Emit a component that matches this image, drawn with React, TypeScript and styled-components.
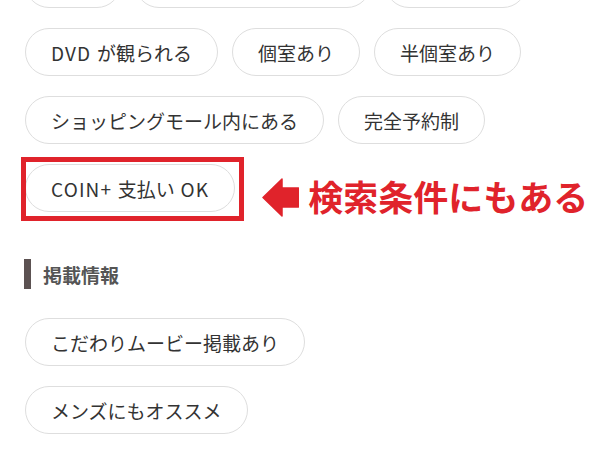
import React from "react";
import styled, { createGlobalStyle } from "styled-components";

const GlobalStyle = createGlobalStyle`
  html, body {
    margin: 0;
    padding: 0;
    background: #ffffff;
  }
  body {
    font-family: "Noto Sans CJK JP", "Noto Sans", sans-serif;
    color: #333333;
    overflow: hidden;
  }
`;

const Page = styled.div`
  display: flex;
  flex-direction: column;
  padding: 0 0 0 25px;
  margin-top: -40px;
`;

const TagList = styled.ul<{ $column?: boolean }>`
  display: flex;
  flex-direction: ${(p) => (p.$column ? "column" : "row")};
  flex-wrap: ${(p) => (p.$column ? "nowrap" : "wrap")};
  align-items: ${(p) => (p.$column ? "flex-start" : "center")};
  column-gap: 14px;
  row-gap: 20px;
  margin: 0;
  padding: 0;
  list-style: none;
`;

const Item = styled.li`
  display: flex;
  align-items: flex-start;
`;

const Tag = styled.span<{ $outlined?: boolean; $width?: number }>`
  position: relative;
  box-sizing: border-box;
  display: inline-flex;
  align-items: center;
  justify-content: center;
  height: 48px;
  width: ${(p) => (p.$width ? `${p.$width}px` : "auto")};
  padding: 0 25px;
  border: 1px solid #dedede;
  border-radius: 24px;
  background: #ffffff;
  color: #333333;
  font-size: 19px;
  line-height: 1;
  white-space: nowrap;

  ${(p) =>
    p.$outlined &&
    `
    &::after {
      content: "";
      position: absolute;
      top: -8px;
      left: -5px;
      right: -10px;
      bottom: -10px;
      border: 5px solid #e0232b;
    }
  `}
`;

const Latin = styled.span<{ $lead?: boolean }>`
  letter-spacing: 0.06em;
  margin-right: ${(p) => (p.$lead ? "0.3em" : "0")};
  margin-left: ${(p) => (p.$lead ? "0" : "0.3em")};
`;

const Note = styled.div`
  display: flex;
  align-items: center;
  gap: 9px;
  margin: 14px 0 -5px 27px;
`;

const NoteText = styled.span`
  font-size: 35px;
  font-weight: 700;
  line-height: 1;
  color: #e0232b;
  white-space: nowrap;
  margin-bottom: 4px;
`;

const Heading = styled.h2`
  display: flex;
  align-items: center;
  height: 30px;
  margin: 47px 0 29px -1px;
  padding-left: 12px;
  border-left: 7px solid #5c5252;
  font-size: 19px;
  font-weight: 700;
  color: #555555;
  line-height: 1;
`;

const Arrow = () => (
  <svg width="37" height="39" viewBox="0 0 37 39" aria-hidden="true">
    <polygon
      points="1,19.5 20,1 20,10 36.5,10 36.5,29 20,29 20,38"
      fill="#e0232b"
      stroke="#e0232b"
      strokeWidth="1.5"
      strokeLinejoin="round"
    />
  </svg>
);

const hiddenRow = [96, 236, 142];

export default function App() {
  return (
    <>
      <GlobalStyle />
      <Page>
        <TagList>
          {hiddenRow.map((w, i) => (
            <Item key={`h${i}`}>
              <Tag $width={w} />
            </Item>
          ))}
          <Item>
            <Tag>
              <Latin $lead>DVD</Latin>が観られる
            </Tag>
          </Item>
          <Item>
            <Tag>個室あり</Tag>
          </Item>
          <Item>
            <Tag>半個室あり</Tag>
          </Item>
          <Item>
            <Tag>ショッピングモール内にある</Tag>
          </Item>
          <Item>
            <Tag>完全予約制</Tag>
          </Item>
          <Item>
            <Tag $outlined>
              <Latin $lead>COIN+</Latin>支払い<Latin>OK</Latin>
            </Tag>
            <Note>
              <Arrow />
              <NoteText>検索条件にもある</NoteText>
            </Note>
          </Item>
        </TagList>
        <Heading>掲載情報</Heading>
        <TagList $column>
          <Item>
            <Tag>こだわりムービー掲載あり</Tag>
          </Item>
          <Item>
            <Tag>メンズにもオススメ</Tag>
          </Item>
        </TagList>
      </Page>
    </>
  );
}
